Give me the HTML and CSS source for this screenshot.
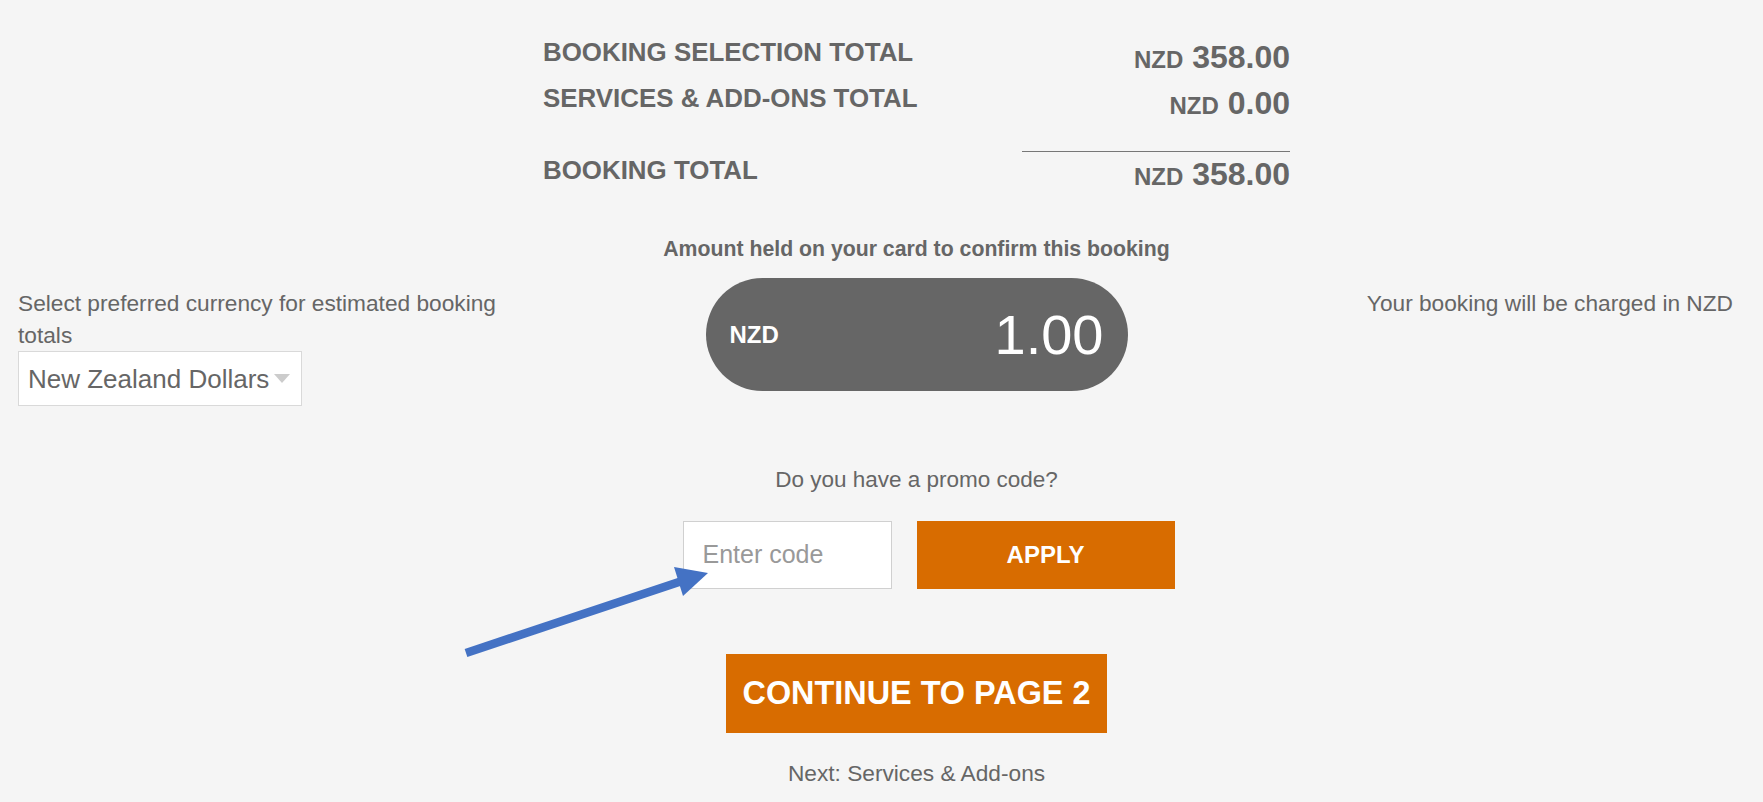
FILE: index.html
```html
<!DOCTYPE html>
<html lang="en">
<head>
<meta charset="utf-8">
<title>Booking summary</title>
<link rel="stylesheet" href="styles.css">
</head>
<body>
<div class="layout">
  <section class="totals">
    <div class="total-row">
      <div class="total-label">BOOKING SELECTION TOTAL</div>
      <div class="total-value"><span class="cur">NZD</span> 358.00</div>
    </div>
    <div class="total-row">
      <div class="total-label">SERVICES &amp; ADD-ONS TOTAL</div>
      <div class="total-value"><span class="cur">NZD</span> 0.00</div>
    </div>
    <div class="total-row grand">
      <div class="total-label">BOOKING TOTAL</div>
      <div class="total-value"><span class="cur">NZD</span> 358.00</div>
    </div>
  </section>

  <div class="side side-left">
    <div class="side-text">Select preferred currency for estimated booking totals</div>
    <div class="select">
      <span class="select-text">New Zealand Dollars</span>
      <span class="select-caret"></span>
    </div>
  </div>

  <div class="center">
    <div class="held-label">Amount held on your card to confirm this booking</div>
    <div class="pill">
      <span class="pill-cur">NZD</span>
      <span class="pill-amount">1.00</span>
    </div>
    <div class="promo-q">Do you have a promo code?</div>
    <div class="promo-row">
      <input class="promo-input" type="text" placeholder="Enter code">
      <button class="btn btn-apply" type="button">APPLY</button>
    </div>
    <button class="btn btn-continue" type="button">CONTINUE TO PAGE 2</button>
    <div class="next-note">Next: Services &amp; Add-ons</div>
  </div>

  <div class="side side-right">
    <div class="side-text">Your booking will be charged in NZD</div>
  </div>
</div>

<svg class="annotation" width="1763" height="802" viewBox="0 0 1763 802" aria-hidden="true">
  <line x1="466" y1="653" x2="682" y2="581" stroke="#4472c4" stroke-width="8.5"/>
  <polygon points="708,573 674,567 683,596" fill="#4472c4"/>
</svg>
</body>
</html>
```

FILE: styles.css
```css
html, body {
  margin: 0;
  padding: 0;
  height: 802px;
  overflow: hidden;
  background: #f5f5f5;
}

body {
  font-family: "Liberation Sans", Arial, Helvetica, sans-serif;
  color: #666;
  position: relative;
}

.layout {
  display: grid;
  grid-template-columns: 482px 833px 1fr;
  align-items: start;
  padding: 0 30px 0 18px;
}

/* ---- totals ---- */
.totals {
  grid-column: 2;
  grid-row: 1;
  margin: 0 43px;
  padding-top: 34px;
}

.total-row {
  display: flex;
  justify-content: space-between;
  align-items: flex-start;
  height: 46px;
}

.total-label {
  font-size: 25.9px;
  font-weight: bold;
  line-height: 36px;
}

.total-value {
  font-size: 32px;
  font-weight: bold;
  line-height: 46px;
  text-align: right;
}

.total-value .cur {
  font-size: 24px;
}

.total-row.grand {
  margin-top: 25px;
  height: 45px;
}

.total-row.grand .total-label {
  padding-top: 1px;
}

.total-row.grand .total-value {
  width: 268px;
  border-top: 1px solid #777;
  line-height: 44px;
}

/* ---- side columns ---- */
.side {
  grid-row: 2;
  margin-top: 92px;
}

.side-left {
  grid-column: 1;
}

.side-right {
  grid-column: 3;
  text-align: right;
}

.side-text {
  font-size: 22.7px;
  line-height: 31.5px;
}

.select {
  display: flex;
  align-items: center;
  width: 282px;
  height: 53px;
  background: #fff;
  border: 1px solid #d9d9d9;
}

.select-text {
  font-size: 26px;
  padding-left: 9px;
  line-height: 1;
}

.select-caret {
  width: 0;
  height: 0;
  margin-left: 5px;
  border-left: 8.5px solid transparent;
  border-right: 8.5px solid transparent;
  border-top: 9.5px solid #ccc;
}

/* ---- center column ---- */
.center {
  grid-column: 2;
  grid-row: 2;
  display: flex;
  flex-direction: column;
  align-items: center;
  padding-top: 38px;
}

.held-label {
  font-size: 21.25px;
  font-weight: bold;
  line-height: 30px;
}

.pill {
  margin-top: 14px;
  width: 422px;
  height: 113px;
  box-sizing: border-box;
  padding: 0 24px;
  border-radius: 57px;
  background: #666;
  color: #fff;
  display: flex;
  justify-content: space-between;
  align-items: center;
}

.pill-cur {
  font-size: 24px;
  font-weight: bold;
  line-height: 1;
}

.pill-amount {
  font-size: 56px;
  line-height: 1;
}

.promo-q {
  margin-top: 73px;
  font-size: 22.5px;
  line-height: 31.5px;
}

.promo-row {
  margin-top: 25px;
  display: flex;
  gap: 25px;
  padding-left: 24px;
}

.promo-input {
  width: 209px;
  height: 68px;
  box-sizing: border-box;
  margin: 0;
  padding: 0 0 0 19px;
  border: 1px solid #d0d0d0;
  background: #fff;
  font-family: inherit;
  font-size: 25px;
  color: #666;
  outline: none;
}

.promo-input::placeholder {
  color: #999;
}

.btn {
  margin: 0;
  border: 0;
  background: #d86c00;
  color: #fff;
  font-family: inherit;
  font-weight: bold;
  display: flex;
  align-items: center;
  justify-content: center;
  cursor: pointer;
}

.btn-apply {
  width: 258px;
  height: 68px;
  font-size: 24px;
}

.btn-continue {
  margin-top: 65px;
  width: 381px;
  height: 79px;
  font-size: 32.4px;
}

.next-note {
  margin-top: 25px;
  font-size: 22.7px;
  line-height: 31.5px;
}

/* ---- annotation overlay ---- */
.annotation {
  position: absolute;
  left: 0;
  top: 0;
  pointer-events: none;
}
```
